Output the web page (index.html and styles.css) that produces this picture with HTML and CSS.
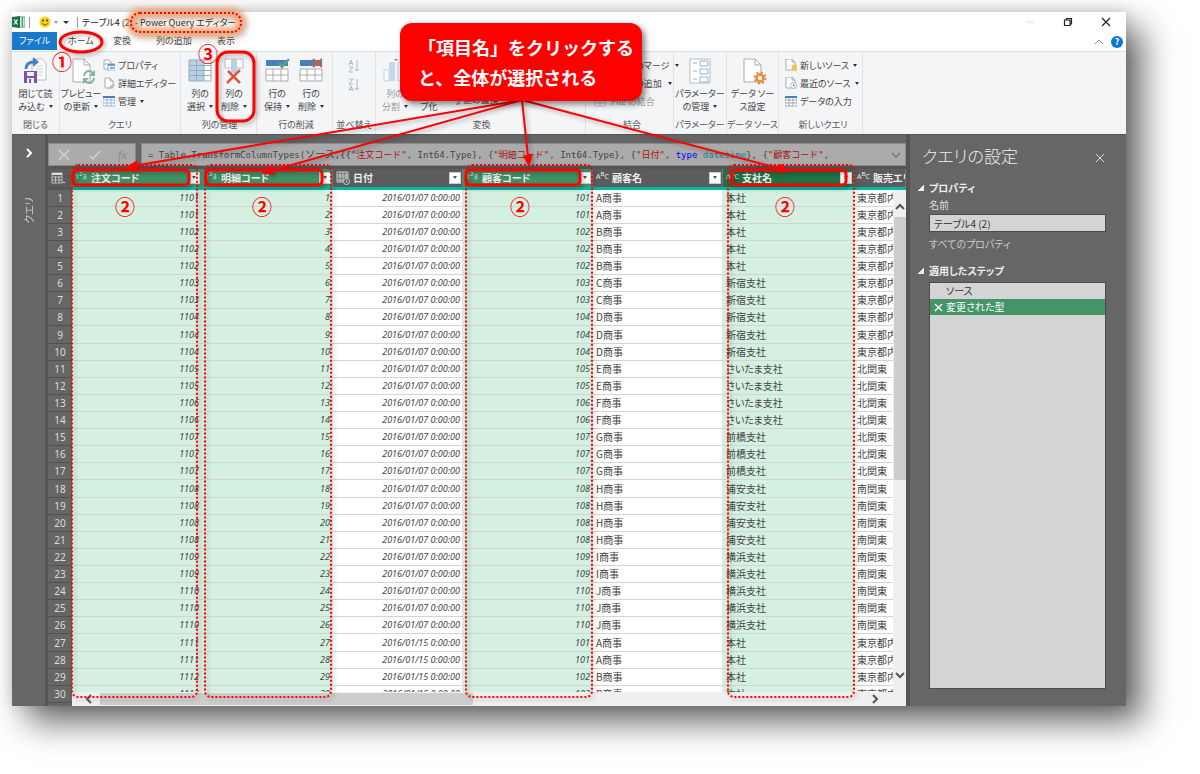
FILE: index.html
```html
<!DOCTYPE html>
<html lang="ja">
<head>
<meta charset="utf-8">
<title>Power Query エディター</title>
<link rel="stylesheet" href="styles.css">
</head>
<body>
<div class="window">
  <header class="titlebar">
    <svg class="excel" viewBox="0 0 13 12"><rect x="6" y="1" width="7" height="10" fill="#fff" stroke="#4a9a70" stroke-width="1"/><path d="M8.500 3h3M8.500 5h3M8.500 7h3M8.500 9h3M10.500 1v10" stroke="#4a9a70"/><path d="M0 1l8-1v12l-8-1z" fill="#1e7145"/><path d="M2 3.500l3.500 5M5.500 3.500L2 8.500" stroke="#fff" stroke-width="1.300"/></svg>
    <span class="divider"></span>
    <svg class="smile" viewBox="0 0 12 12"><circle cx="6" cy="6" r="5.500" fill="#fcd116"/><circle cx="4" cy="4.500" r="1" fill="#4a3b00"/><circle cx="8" cy="4.500" r="1" fill="#4a3b00"/><path d="M2.800 7q3.200 4 6.400 0" fill="none" stroke="#7a5a00" stroke-width="1"/></svg>
    <span class="caret caret-gray"></span>
    <span class="quick"></span>
    <span class="divider"></span>
    <h1 class="title">テーブル4 (2) - Power Query エディター</h1>
    <div class="window-buttons">
      <button aria-label="最小化"><svg viewBox="0 0 10 10"><path d="M1 5h8" stroke="#ddd"/></svg></button>
      <button aria-label="元に戻す"><svg viewBox="0 0 10 10"><path d="M1.500 3h5.500v5.500h-5.500zM3.500 3v-1.500h5v5.500h-1.500" fill="none" stroke="#222" stroke-width="1.200"/></svg></button>
      <button aria-label="閉じる"><svg viewBox="0 0 10 10"><path d="M1 1l8 8M9 1l-8 8" stroke="#222" stroke-width="1.200"/></svg></button>
    </div>
  </header>
  <nav class="tabs">
    <button class="tab tab-file">ファイル</button>
    <button class="tab tab-home">ホーム</button>
    <button class="tab tab-convert">変換</button>
    <button class="tab tab-add">列の追加</button>
    <button class="tab tab-view">表示</button>
    <div class="tab-tools">
      <svg class="chevron" viewBox="0 0 10 6"><path d="M1 5l4-4 4 4" fill="none" stroke="#888"/></svg>
      <button class="help" aria-label="ヘルプ">?</button>
    </div>
  </nav>
  <section class="ribbon">
    <div class="group g-close">
      <div class="tools">
        <button class="big"><svg viewBox="0 0 28 28"><path d="M10 2h10l4 4v17H10z" fill="#fff" stroke="#bbb"/><path d="M14 9h7M14 12h7M14 15h7M14 18h7" stroke="#ccc"/><path d="M4 12q0-7 8-7" fill="none" stroke="#4a80ba" stroke-width="3"/><path d="M11 0l6 5-6 5z" fill="#4a80ba"/><path d="M2 14h13v12H2z" fill="#7b54a3"/><path d="M5 15h7v4H5zM5 21h7v5H5z" fill="#f4f0f8"/><path d="M7 22h2v4H7z" fill="#7b54a3"/></svg><span>閉じて読<br>み込む<i class="caret"></i></span></button>
      </div>
      <div class="group-name">閉じる</div>
    </div>
    <div class="group g-query">
      <div class="tools">
        <button class="big"><svg viewBox="0 0 28 28"><path d="M6 2h11l6 6v17H6z" fill="#fff" stroke="#aaa"/><path d="M17 2v6h6" fill="none" stroke="#aaa"/><path d="M17 19q1-5 5-5 3 0 4 3M27 21q-1 5-5 5-3 0-4-3" fill="none" stroke="#84b59a" stroke-width="2"/><path d="M28 13v6h-6zM16 27v-6h6z" fill="#84b59a"/></svg><span>プレビュー<br>の更新<i class="caret"></i></span></button>
        <div class="list">
          <button><svg viewBox="0 0 12 12"><path d="M1 1h5l2 2v7H1zM1 5h5" fill="#fff" stroke="#aaa"/><path d="M5 5h7v7H5z" fill="#fff" stroke="#8aa9c8"/><path d="M5 6h7M7 9h4" stroke="#4a80ba" stroke-width="1.500"/></svg>プロパティ</button>
          <button><svg viewBox="0 0 12 12"><path d="M2 1h5l3 3v7H2zM7 1v3h3" fill="#fff" stroke="#aaa"/><path d="M5 11l6-5 1 2-5 4z" fill="#bbb"/></svg>詳細エディター</button>
          <button><svg viewBox="0 0 12 12"><path d="M0 2h12v9H0zM0 5h12M0 8h12M4 2v9M8 2v9" fill="#fff" stroke="#9db7d1"/><path d="M0 2h12" stroke="#4a80ba" stroke-width="2"/></svg>管理<i class="caret"></i></button>
        </div>
      </div>
      <div class="group-name">クエリ</div>
    </div>
    <div class="group g-cols">
      <div class="tools">
        <button class="big"><svg viewBox="0 0 28 28"><path d="M3 3h15v21H3z" fill="#b8cfe8"/><path d="M18 3h7v21h-7z" fill="#fff"/><path d="M3 3h22v21H3zM3 8.500h22M3 13.500h22M3 18.500h22M10.500 3v21M18 3v21" fill="none" stroke="#9ab"/></svg><span>列の<br>選択<i class="caret"></i></span></button>
        <button class="big"><svg viewBox="0 0 28 28"><path d="M5 2h18v9H5z" fill="#fff" stroke="#bbb"/><path d="M11 2h6v14h-6z" fill="#b8cfe8"/><path d="M8 14l12 12M20 13L7 26" stroke="#d9593c" stroke-width="2.500"/></svg><span>列の<br>削除<i class="caret"></i></span></button>
      </div>
      <div class="group-name">列の管理</div>
    </div>
    <div class="group g-rows">
      <div class="tools">
        <button class="big"><svg viewBox="0 0 28 28"><path d="M3 3h22v6H3z" fill="#4a80ba"/><path d="M3 12h22v12H3zM3 18h22M10 12v12M18 12v12" fill="#fff" stroke="#aaa"/><path d="M16 6l3 4 7-8" fill="none" stroke="#63a280" stroke-width="2.500"/></svg><span>行の<br>保持<i class="caret"></i></span></button>
        <button class="big"><svg viewBox="0 0 28 28"><path d="M3 3h22v6H3z" fill="#4a80ba"/><path d="M3 12h22v12H3zM3 18h22M10 12v12M18 12v12" fill="#fff" stroke="#aaa"/><path d="M16 2l9 8M25 2l-9 8" stroke="#d9593c" stroke-width="2"/></svg><span>行の<br>削除<i class="caret"></i></span></button>
      </div>
      <div class="group-name">行の削減</div>
    </div>
    <div class="group g-sort">
      <div class="tools">
        <div class="sorts">
          <button aria-label="昇順で並べ替え"><svg viewBox="0 0 12 14"><path d="M1 6l2-5 2 5M1.500 4.500h3M1 8h4l-4 5h4M9 1v11M7 10l2 2 2-2" fill="none" stroke="#a9b8cc"/></svg></button>
          <button aria-label="降順で並べ替え"><svg viewBox="0 0 12 14"><path d="M1 1h4L1 6h4M1 13l2-5 2 5M1.500 11.500h3M9 1v11M7 10l2 2 2-2" fill="none" stroke="#a9b8cc"/></svg></button>
        </div>
      </div>
      <div class="group-name">並べ替え</div>
    </div>
    <div class="group g-transform">
      <div class="tools">
        <button class="big dim"><svg viewBox="0 0 28 28"><path d="M3 13h5v11H3z" fill="#fff" stroke="#b8cfe8"/><path d="M8 5h6v19H8z" fill="#c6d7ea"/><path d="M17 5h7v19h-7z" fill="#fff" stroke="#b8cfe8"/><path d="M13 2h4l-2 2z" fill="#789"/></svg><span>列の<br>分割<i class="caret"></i></span></button>
        <button class="big"><svg viewBox="0 0 28 28"><path d="M4 4h20v20H4z" fill="#fff" stroke="#aaa"/></svg><span>グルー<br>プ化</span></button>
        <div class="list list-end">
          <button><svg viewBox="0 0 12 12"><path d="M2 1v5h5M5 4l2 2-2 2M9 5h2v6H8" fill="none" stroke="#4a80ba"/></svg>値の置換</button>
        </div>
      </div>
      <div class="group-name">変換</div>
    </div>
    <div class="group g-merge">
      <div class="tools">
        <div class="list">
          <button><svg viewBox="0 0 12 12"><path d="M1 2h10v8H1z" fill="#fff" stroke="#9db7d1"/></svg>クエリのマージ<i class="caret"></i></button>
          <button><svg viewBox="0 0 12 12"><path d="M1 2h10v8H1z" fill="#fff" stroke="#9db7d1"/></svg>クエリの追加<i class="caret"></i></button>
          <button class="dim"><svg viewBox="0 0 12 12"><path d="M1 2h10v9H1zM1 5h10M1 8h10M6 2v9" fill="#fff" stroke="#b8c8da"/></svg>File の結合</button>
        </div>
      </div>
      <div class="group-name">結合</div>
    </div>
    <div class="group g-param">
      <div class="tools">
        <button class="big"><svg viewBox="0 0 28 28"><path d="M4 2h20v24H4z" fill="#fff" stroke="#bbb"/><path d="M7 6h4M7 14h4M7 22h4" stroke="#aaa"/><path d="M14 4h8v5h-8zM14 12h8v5h-8zM14 20h8v5h-8z" fill="#fff" stroke="#8db4dc"/></svg><span>パラメーター<br>の管理<i class="caret"></i></span></button>
      </div>
      <div class="group-name">パラメーター</div>
    </div>
    <div class="group g-source">
      <div class="tools">
        <button class="big"><svg viewBox="0 0 28 28"><path d="M5 2h11l6 6v17H5z" fill="#fff" stroke="#aaa"/><path d="M16 2v6h6" fill="none" stroke="#aaa"/><circle cx="21" cy="21" r="5.500" fill="none" stroke="#e98b3a" stroke-width="2" stroke-dasharray="2.200 2.100"/><circle cx="21" cy="21" r="3.500" fill="#f5f6f8" stroke="#e98b3a" stroke-width="2.500"/></svg><span>データ ソー<br>ス設定</span></button>
      </div>
      <div class="group-name">データ ソース</div>
    </div>
    <div class="group g-new">
      <div class="tools">
        <div class="list">
          <button><svg viewBox="0 0 12 12"><path d="M1 0h6l3 3v8H1zM7 0v3h3" fill="#fff" stroke="#aaa"/><path d="M7 6q2.500-1.500 5 0v6H7z" fill="#f0c267"/></svg>新しいソース<i class="caret"></i></button>
          <button><svg viewBox="0 0 12 12"><path d="M1 0h6l3 3v8H1zM7 0v3h3" fill="#fff" stroke="#aaa"/><circle cx="8.500" cy="8.500" r="3" fill="#fff" stroke="#9db7d1"/><path d="M8.500 7v2h1.500" fill="none" stroke="#789"/></svg>最近のソース<i class="caret"></i></button>
          <button><svg viewBox="0 0 12 12"><path d="M0 2h12v9H0zM0 5h12M0 8h12M4 2v9M8 2v9" fill="#fff" stroke="#aaa"/><path d="M0 2h12" stroke="#4a80ba" stroke-width="2"/></svg>データの入力</button>
        </div>
      </div>
      <div class="group-name">新しいクエリ</div>
    </div>
  </section>
  <main class="body">
    <aside class="queries">
      <button class="expand" aria-label="展開"><svg viewBox="0 0 6 10"><path d="M1 1l4 4-4 4" fill="none" stroke="#fff" stroke-width="2"/></svg></button>
      <span class="queries-name">クエリ</span>
    </aside>
    <section class="editor">
      <div class="formula-row">
        <div class="formula-tools">
          <button aria-label="取り消し"><svg viewBox="0 0 14 12"><path d="M2 1l10 10M12 1L2 11" stroke="#d2d2d2" stroke-width="1.500"/></svg></button>
          <button aria-label="確定"><svg viewBox="0 0 14 12"><path d="M2 7l3 3 7-8" fill="none" stroke="#d2d2d2" stroke-width="1.500"/></svg></button>
          <button class="fx">fx</button>
        </div>
        <div class="formula">
          <code>= Table.TransformColumnTypes(<span class="source">ソース</span>,{{<b>"注文コード"</b>, Int64.Type}, {<b>"明細コード"</b>, Int64.Type}, {<b>"日付"</b>, <em>type</em> <u>datetime</u>}, {<b>"顧客コード"</b>,</code>
          <svg class="chevron" viewBox="0 0 10 6"><path d="M1 1l4 4 4-4" fill="none" stroke="#777" stroke-width="1.500"/></svg>
        </div>
      </div>
      <div class="grid">
        <table>
          <colgroup><col class="c-num"><col class="c-a"><col class="c-b"><col class="c-a"><col class="c-a"><col class="c-a"><col class="c-b"><col></colgroup>
          <thead>
            <tr>
              <th class="corner"><div class="head"><svg viewBox="0 0 14 12"><path d="M1 1h10v10H1zM1 5h10M1 8h10M4.500 4v7M8 4v7" fill="none" stroke="#bbb"/><path d="M1 2h10" stroke="#ddd" stroke-width="2"/><path d="M12 10h2v1h-2z" fill="#ddd"/></svg></div></th>
              <th class="sel"><div class="head"><span class="type">1<sup>2</sup>3</span>注文コード<button class="filter" aria-label="注文コード"><i class="caret"></i></button></div></th>
              <th class="sel"><div class="head"><span class="type">1<sup>2</sup>3</span>明細コード<button class="filter" aria-label="明細コード"><i class="caret"></i></button></div></th>
              <th><div class="head"><svg viewBox="0 0 14 14"><path d="M1 1h11v10H1zM1 4h11M1 6h11M1 9h11M4 1v10M7 1v10M10 1v10" fill="none" stroke="#ccc"/><circle cx="10.500" cy="10.500" r="3" fill="#5c5c5c" stroke="#ccc"/><path d="M10.500 9v2h1" fill="none" stroke="#ccc"/></svg>日付<button class="filter" aria-label="日付"><i class="caret"></i></button></div></th>
              <th class="sel"><div class="head"><span class="type">1<sup>2</sup>3</span>顧客コード<button class="filter" aria-label="顧客コード"><i class="caret"></i></button></div></th>
              <th><div class="head"><span class="type">A<sup>B</sup>C</span>顧客名<button class="filter" aria-label="顧客名"><i class="caret"></i></button></div></th>
              <th class="active"><div class="head"><span class="type">A<sup>B</sup>C</span>支社名<button class="filter" aria-label="支社名"><i class="caret"></i></button></div></th>
              <th><div class="head"><span class="type">A<sup>B</sup>C</span>販売エリ</div></th>
            </tr>
          </thead>
          <tbody id="rows"></tbody>
        </table>
        <div class="vscroll">
          <svg viewBox="0 0 10 8"><path d="M1 6l4-4 4 4" fill="none" stroke="#555" stroke-width="2"/></svg>
          <div class="vthumb"></div>
          <svg viewBox="0 0 10 8"><path d="M1 2l4 4 4-4" fill="none" stroke="#555" stroke-width="2"/></svg>
        </div>
        <div class="hscroll">
          <svg viewBox="0 0 8 10"><path d="M6 1L2 5l4 4" fill="none" stroke="#555" stroke-width="2"/></svg>
          <div class="hthumb"></div>
          <svg viewBox="0 0 8 10"><path d="M2 1l4 4-4 4" fill="none" stroke="#555" stroke-width="2"/></svg>
        </div>
      </div>
    </section>
    <aside class="settings">
      <div class="settings-head">
        <h2>クエリの設定</h2>
        <button aria-label="設定を閉じる"><svg viewBox="0 0 10 10"><path d="M1 1l8 8M9 1L1 9" stroke="#ddd"/></svg></button>
      </div>
      <h3><i class="tri"></i>プロパティ</h3>
      <div class="props">
        <label for="query-name">名前</label>
        <input id="query-name" type="text" value="テーブル4 (2)">
        <a href="#">すべてのプロパティ</a>
      </div>
      <h3><i class="tri"></i>適用したステップ</h3>
      <ul class="steps">
        <li>ソース</li>
        <li class="current"><svg viewBox="0 0 10 10"><path d="M1 1l8 8M9 1L1 9" stroke="#fff" stroke-width="1.500"/></svg>変更された型</li>
      </ul>
    </aside>
  </main>
</div>
<div class="notes">
  <svg class="marks" viewBox="0 0 1200 774" width="1200" height="774">
    <defs>
      <marker id="arrow" markerUnits="userSpaceOnUse" markerWidth="12" markerHeight="10" refX="11" refY="5" orient="auto"><path d="M0 0l12 5-12 5z" fill="#f00"/></marker>
    </defs>
    <rect class="glow" x="131" y="13" width="110" height="19" rx="9"/>
    <g class="dots">
      <rect x="131" y="13" width="110" height="19" rx="9"/>
      <rect x="72" y="165" width="125" height="532" rx="6"/>
      <rect x="205" y="165" width="126" height="532" rx="6"/>
      <rect x="466" y="165" width="126" height="532" rx="6"/>
      <rect x="728" y="165" width="126" height="532" rx="6"/>
    </g>
    <g class="solid">
      <ellipse cx="81" cy="42" rx="21" ry="10"/>
      <rect x="217" y="52" width="37" height="69" rx="11"/>
      <rect x="73" y="170" width="116" height="15" rx="4"/>
      <rect x="206" y="170" width="116" height="15" rx="4"/>
      <rect x="466" y="170" width="114" height="15" rx="4"/>
      <rect x="732" y="170" width="114" height="15" rx="4"/>
    </g>
    <g class="lines">
      <path d="M522 100L127 167"/>
      <path d="M522 100L263 173"/>
      <path d="M522 100L529 166"/>
      <path d="M522 100L789 171"/>
    </g>
  </svg>
  <p class="callout">「項目名」をクリックする<br>と、全体が選択される</p>
  <span class="num n1">①</span>
  <span class="num n3">③</span>
  <span class="num n2a">②</span>
  <span class="num n2b">②</span>
  <span class="num n2c">②</span>
  <span class="num n2d">②</span>
</div>
<script src="rows.js"></script>
</body>
</html>
```

FILE: styles.css
```css
* { box-sizing: border-box; }
body {
  margin: 0;
  background: #fff;
  color: #444;
  font: 10px/13px "Noto Sans CJK JP", sans-serif;
  font-feature-settings: "palt";
  overflow: hidden;
}
button {
  border: 0;
  padding: 0;
  background: none;
  color: inherit;
  font: inherit;
  font-feature-settings: inherit;
  white-space: nowrap;
}
svg { display: block; flex: none; }
h1, h2, h3, p, ul { margin: 0; padding: 0; font: inherit; }

.window {
  display: flex;
  flex-direction: column;
  height: calc(100vh - 80px);
  margin: 12px 74px 68px 12px;
  background: #fff;
  box-shadow: 16px 16px 32px rgba(0, 0, 0, .6), 0 0 14px rgba(0, 0, 0, .15);
}
.caret {
  display: inline-block;
  flex: none;
  margin-left: 4px;
  border: 2px solid transparent;
  border-top: 3px solid #333;
  border-bottom: 0;
  vertical-align: 2px;
}
.caret-gray { border-top-color: #999; margin: 0; }

.titlebar { display: flex; align-items: center; height: 20px; color: #222; font-size: 9px; }
.excel { width: 13px; height: 12px; }
.divider { width: 1px; height: 11px; margin-left: 4px; background: #999; }
.smile { width: 12px; height: 12px; margin: 0 3px 0 9px; }
.quick {
  width: 6px;
  margin: 0 4px 0 5px;
  border: 3px solid transparent;
  border-top-color: #333;
  border-bottom: 0;
}
.title { margin-left: 4px; white-space: nowrap; }
.window-buttons { display: flex; gap: 28px; margin-left: auto; padding-right: 15px; }
.window-buttons svg { width: 10px; height: 10px; }

.tabs { display: flex; height: 19px; font-size: 9px; line-height: 18px; }
.tab { height: 18px; line-height: 18px; text-align: left; }
.tab-file { width: 45px; background: #1979ca; color: #fff; text-align: center; }
.tab-home { width: 56px; padding-left: 11px; }
.tab-convert { width: 43px; }
.tab-add { width: 61px; }
.tab-tools { display: flex; align-items: center; gap: 7px; margin-left: auto; padding-right: 3px; }
.chevron { width: 10px; height: 6px; }
.help {
  width: 12px;
  height: 12px;
  border-radius: 50%;
  background: #0a76d8;
  color: #fff;
  font-weight: 700;
  font-size: 9px;
  line-height: 12px;
}

.ribbon {
  display: flex;
  height: 83px;
  border-top: 1px solid #dcdfe3;
  background: #f4f5f7;
  font-size: 9px;
}
.group {
  display: flex;
  flex: none;
  flex-direction: column;
  justify-content: space-between;
  border-right: 1px solid #e0e2e5;
  padding: 4px 0 3px;
}
.group-name { text-align: center; color: #555; white-space: nowrap; }
.tools { display: flex; }
.big { display: flex; flex-direction: column; align-items: center; width: 34px; padding-top: 1px; }
.big svg { width: 28px; height: 28px; }
.big span { margin-top: 2px; }
.dim { color: #999; }
.g-close { width: 48px; }
.g-close .big { width: 47px; }
.g-query { width: 121px; }
.g-query .big { width: 42px; }
.g-cols { width: 76px; padding-left: 2px; }
.g-rows { width: 76px; padding-left: 3px; }
.g-sort { width: 43px; }
.g-transform { width: 210px; padding-left: 2px; }
.g-merge { width: 88px; padding-left: 5px; }
.g-param { width: 53px; }
.g-param .big, .g-source .big { width: 52px; }
.g-source { width: 52px; }
.g-new { width: 84px; padding-left: 5px; }
.list { display: flex; flex-direction: column; margin-left: 1px; }
.list button { display: flex; align-items: center; height: 18px; gap: 3px; }
.list svg { width: 12px; height: 12px; }
.list .caret { margin-left: 1px; }
.list-end { justify-content: flex-end; margin: 0 0 5px 2px; }
.sorts { display: flex; flex-direction: column; gap: 5px; margin: 3px auto; }
.sorts svg { width: 12px; height: 14px; }
.g-merge .list { margin-left: 3px; }
.g-merge .list button { gap: 5px; }

.body { display: flex; flex: 1; min-height: 0; border-top: 1px solid #555; background: #666; }
.queries {
  display: flex;
  flex: none;
  flex-direction: column;
  align-items: center;
  width: 36px;
  border-right: 3px solid #555;
  padding-top: 13px;
  color: #ccc;
}
.expand svg { width: 6px; height: 10px; }
.queries-name {
  margin-top: 39px;
  writing-mode: vertical-rl;
  text-orientation: sideways;
  transform: rotate(180deg);
}
.editor { display: flex; flex: 1; flex-direction: column; min-width: 0; }
.formula-row { display: flex; gap: 5px; height: 34px; padding-top: 8px; border-bottom: 3px solid #555; }
.formula-tools {
  display: flex;
  align-items: center;
  justify-content: space-around;
  width: 88px;
  height: 23px;
  border: 1px solid #8a8a8a;
  background: #ababab;
}
.formula-tools svg { width: 14px; height: 12px; }
.fx { color: #888; font: italic 12px/20px "Liberation Serif", serif; }
.formula {
  display: flex;
  flex: 1;
  align-items: center;
  justify-content: space-between;
  height: 23px;
  min-width: 0;
  padding: 0 4px 0 6px;
  border: 1px solid #8a8a8a;
  background: #ababab;
}
.formula code {
  overflow: hidden;
  color: #444;
  font: 9px/20px "DejaVu Sans Mono", "Noto Sans CJK JP", monospace;
  font-feature-settings: normal;
  white-space: nowrap;
}
.source { font-size: 10px; }
.formula b { color: #a31515; font-weight: 400; }
.formula em { color: #00f; font-style: normal; }
.formula u { color: #1a8295; text-decoration: none; }

.grid { position: relative; flex: 1; min-height: 0; overflow: hidden; }
table { width: 100%; table-layout: fixed; border-spacing: 0; }
.c-num { width: 24px; }
.c-a { width: 130px; }
.c-b { width: 131px; }
th, td { padding: 0; overflow: hidden; white-space: nowrap; }
thead th {
  height: 21px;
  border-right: 1px solid #777;
  border-bottom: 3px solid #01b8aa;
  background: #5c5c5c;
  color: #eee;
  text-align: left;
}
thead .corner { border-bottom-color: #555; }
.corner svg { width: 16px; height: 14px; }
thead .sel { background: #3f9166; }
thead .active { background: #217346; }
.head { display: flex; align-items: center; height: 18px; padding: 0 1px 1px 3px; font-weight: 700; }
.head > svg { width: 14px; height: 14px; margin-right: 3px; }
.type { flex: none; width: 16px; font: 7px/12px "Noto Sans", sans-serif; }
.type sup { font-size: 6px; line-height: 6px; }
.filter {
  display: flex;
  align-items: center;
  justify-content: center;
  width: 12px;
  height: 12px;
  margin-left: auto;
  border: 1px solid #ccc;
  background: #fff;
}
.filter .caret { margin: 0; border-top-color: #555; }
tbody tr { height: 17px; }
tbody tr:nth-child(9n) { height: 18px; }
tbody th {
  border-bottom: 1px solid #505050;
  color: #ddd;
  font: 10px/16px "Noto Sans", sans-serif;
}
tbody td {
  padding: 0 2px 0 3px;
  border-right: 1px solid #e4e4e4;
  border-bottom: 1px solid #d4d4d4;
  background: #fff;
  line-height: 16px;
}
tbody .picked { background: #d3f0e0; }
tbody .value { font: italic 9px/16px "Noto Sans", sans-serif; text-align: right; }
.vscroll {
  position: absolute;
  top: 21px;
  right: 0;
  bottom: 14px;
  display: flex;
  flex-direction: column;
  align-items: center;
  width: 13px;
  padding: 12px 0 12px;
  background: #efefef;
}
.vscroll svg { width: 10px; height: 10px; }
.vthumb { width: 12px; height: 55%; margin: 5px 0 auto; background: #cdcdcd; }
.hscroll {
  position: absolute;
  right: 0;
  bottom: 0;
  left: 24px;
  display: flex;
  align-items: center;
  height: 14px;
  padding: 0 27px 0 13px;
  background: #efefef;
}
.hscroll svg { width: 8px; height: 10px; }
.hthumb { width: 47%; height: 12px; margin: 0 auto 0 7px; background: #cdcdcd; }

.settings {
  display: flex;
  flex: none;
  flex-direction: column;
  width: 220px;
  border-left: 4px solid #555;
  padding: 9px 20px 17px 8px;
  color: #ddd;
}
.settings-head { display: flex; align-items: center; justify-content: space-between; height: 24px; padding-left: 4px; }
.settings-head h2 { font-size: 17px; line-height: 24px; font-weight: 300; color: #eee; }
.settings-head svg { width: 10px; height: 10px; margin: 4px 1px 0 0; }
.settings h3 { display: flex; align-items: center; gap: 5px; margin-top: 13px; font-weight: 700; line-height: 14px; color: #eee; }
.tri { width: 6px; height: 6px; background: linear-gradient(135deg, transparent 50%, #eee 50%); }
.props { display: flex; flex-direction: column; margin-left: 11px; }
.props label { margin-top: 3px; line-height: 14px; }
.props input {
  width: 100%;
  height: 18px;
  margin-top: 2px;
  padding: 0 4px;
  border: 1px solid #4c4c4c;
  background: #d4d4d4;
  color: #333;
  font: inherit;
  font-feature-settings: inherit;
}
.props a { margin-top: 5px; color: #ccc; text-decoration: none; line-height: 14px; }
.steps { flex: 1; margin: 4px 0 0 11px; border: 1px solid #4c4c4c; background: #d4d4d4; color: #333; list-style: none; }
.steps li { height: 16px; padding-left: 16px; line-height: 16px; }
.steps .current { display: flex; align-items: center; gap: 3px; padding-left: 4px; background: #439467; color: #fff; }
.steps svg { width: 9px; height: 9px; }

.notes { position: absolute; top: 0; left: 0; pointer-events: none; }
.marks { filter: drop-shadow(2px 2px 2px rgba(0, 0, 0, .3)); }
.glow { fill: none; stroke: #ffa064; stroke-width: 7px; filter: blur(3px); }
.dots { fill: none; stroke: #f00; stroke-width: 2px; stroke-dasharray: 2px 2px; }
.solid { fill: none; stroke: #f00; stroke-width: 3px; }
.lines { fill: none; stroke: #f00; stroke-width: 2px; }
.lines path { marker-end: url(#arrow); }
.callout {
  position: absolute;
  top: 23px;
  left: 400px;
  width: 242px;
  padding: 9px 0 9px 18px;
  border-radius: 12px;
  background: #f00;
  box-shadow: 3px 3px 6px rgba(0, 0, 0, .5);
  color: #fff;
  font-size: 18px;
  font-weight: 700;
  line-height: 30px;
  font-feature-settings: normal;
  white-space: nowrap;
}
.num {
  position: absolute;
  color: #f00;
  font-size: 20px;
  font-weight: 700;
  line-height: 20px;
}
.n1 { top: 52px; left: 52px; }
.n3 { top: 44px; left: 198px; }
.n2a { top: 197px; left: 115px; }
.n2b { top: 197px; left: 252px; }
.n2c { top: 197px; left: 510px; }
.n2d { top: 197px; left: 775px; }
```

FILE: rows.js
```js
// Each order: code, number of detail lines, date, customer code, customer, branch, area
const orders = [
  [1101, 2, "2016/01/07", 101, "A商事", "本社", "東京都内"],
  [1102, 3, "2016/01/07", 102, "B商事", "本社", "東京都内"],
  [1103, 2, "2016/01/07", 103, "C商事", "新宿支社", "東京都内"],
  [1104, 3, "2016/01/07", 104, "D商事", "新宿支社", "東京都内"],
  [1105, 2, "2016/01/07", 105, "E商事", "さいたま支社", "北関東"],
  [1106, 2, "2016/01/07", 106, "F商事", "さいたま支社", "北関東"],
  [1107, 3, "2016/01/07", 107, "G商事", "前橋支社", "北関東"],
  [1108, 4, "2016/01/07", 108, "H商事", "浦安支社", "南関東"],
  [1109, 2, "2016/01/07", 109, "I商事", "横浜支社", "南関東"],
  [1110, 3, "2016/01/07", 110, "J商事", "横浜支社", "南関東"],
  [1111, 2, "2016/01/15", 101, "A商事", "本社", "東京都内"],
  [1112, 2, "2016/01/15", 102, "B商事", "本社", "東京都内"]
];
let line = 0;
let html = "";
for (const [code, count, date, customer, name, branch, area] of orders) {
  for (let i = 0; i < count; i++) {
    line++;
    html += `<tr><th scope="row">${line}</th>
      <td class="value picked">${code}</td><td class="value picked">${line}</td>
      <td class="value">${date} 0:00:00</td><td class="value picked">${customer}</td>
      <td>${name}</td><td class="picked">${branch}</td><td>${area}</td></tr>`;
  }
}
document.getElementById("rows").innerHTML = html;
```
